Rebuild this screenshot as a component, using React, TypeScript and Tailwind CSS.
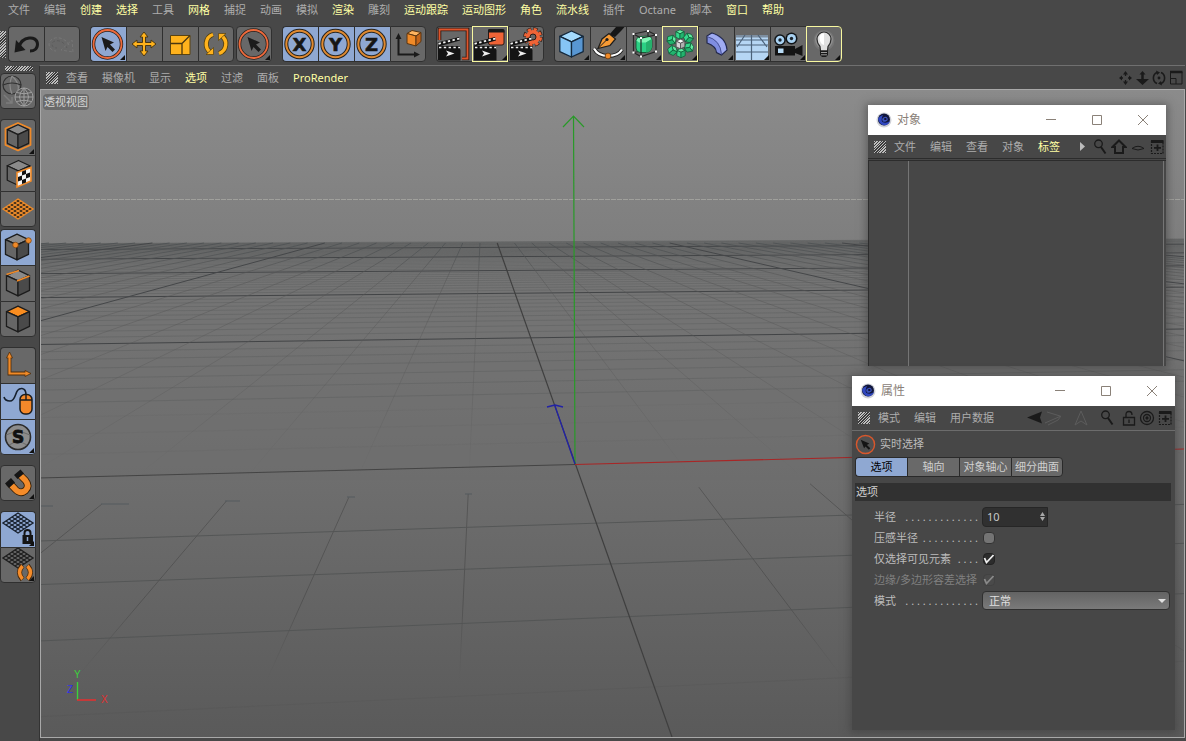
import React, { useState } from "react";
import type { ReactNode } from "react";
import clsx from "clsx";

const FONT = "font-['Noto_Sans','Noto_Sans_CJK_SC',sans-serif]";

type MenuItem = { label: string; hot?: boolean };
type Tool = { name: string; icon: ReactNode; on?: boolean; framed?: boolean; more?: boolean };

const MAIN_MENU: MenuItem[] = [
  { label: "文件" },
  { label: "编辑" },
  { label: "创建", hot: true },
  { label: "选择", hot: true },
  { label: "工具" },
  { label: "网格", hot: true },
  { label: "捕捉" },
  { label: "动画" },
  { label: "模拟" },
  { label: "渲染", hot: true },
  { label: "雕刻" },
  { label: "运动跟踪", hot: true },
  { label: "运动图形", hot: true },
  { label: "角色", hot: true },
  { label: "流水线", hot: true },
  { label: "插件" },
  { label: "Octane" },
  { label: "脚本" },
  { label: "窗口", hot: true },
  { label: "帮助", hot: true },
];

const VIEW_MENU: MenuItem[] = [
  { label: "查看" },
  { label: "摄像机" },
  { label: "显示" },
  { label: "选项", hot: true },
  { label: "过滤" },
  { label: "面板" },
  { label: "ProRender", hot: true },
];

const OBJECT_MENU: MenuItem[] = [
  { label: "文件" },
  { label: "编辑" },
  { label: "查看" },
  { label: "对象" },
  { label: "标签", hot: true },
];

const ATTR_MENU: MenuItem[] = [{ label: "模式" }, { label: "编辑" }, { label: "用户数据" }];

const ATTR_TABS = ["选项", "轴向", "对象轴心", "细分曲面"];

// ── Icon helpers (tool icons share a 36px cell) ──
function Glyph({ children }: { children: ReactNode }) {
  return (
    <svg viewBox="0 0 36 36" className="absolute -top-px -left-px size-9" fill="none">
      {children}
    </svg>
  );
}

function Cube({ x, y, s, top, left, right, stroke = "#1c1c1c", w = 1.5 }: {
  x: number; y: number; s: number; top: string; left: string; right: string; stroke?: string; w?: number;
}) {
  const h = s * 0.9;
  const q = s * 0.42;
  return (
    <g stroke={stroke} strokeWidth={w} strokeLinejoin="round">
      <path d={`M${x} ${y - s}L${x + h} ${y - s + q}L${x} ${y - s + q * 2}L${x - h} ${y - s + q}Z`} fill={top} />
      <path d={`M${x - h} ${y - s + q}L${x} ${y - s + q * 2}V${y + s}L${x - h} ${y + s - q}Z`} fill={left} />
      <path d={`M${x + h} ${y - s + q}L${x} ${y - s + q * 2}V${y + s}L${x + h} ${y + s - q}Z`} fill={right} />
    </g>
  );
}

function SelectRing() {
  return (
    <Glyph>
      <circle cx="17.500" cy="18" r="14" stroke="#2c2420" strokeWidth="3.400" />
      <circle cx="17.500" cy="18" r="14" stroke="#ee6a3c" strokeWidth="1.800" />
      <path d="M11.500 11L24 16.500L20 18.500L25 23.500L22.500 26L17.500 21L15.500 25Z" fill="#1b1b1b" />
    </Glyph>
  );
}

function AxisLetter({ letter }: { letter: string }) {
  return (
    <Glyph>
      <circle cx="17.500" cy="18" r="13.200" stroke="#26231f" strokeWidth="4" />
      <circle cx="17.500" cy="18" r="13.200" stroke="#e08a30" strokeWidth="2" />
      <text
        x="17.500"
        y="24.500"
        textAnchor="middle"
        fontSize="18"
        fontWeight="700"
        fill="#161616"
        stroke="#161616"
        strokeWidth=".6"
        fontFamily="DejaVu Sans, sans-serif"
      >
        {letter}
      </text>
    </Glyph>
  );
}

function Clapper() {
  return (
    <>
      <path d="M2 23.500H24.500V34.500H2Z" fill="#141414" />
      <path d="M1.500 16.500L23 11L24 14.500L2.500 20.500Z" fill="#141414" />
      <path d="M2 20H24V24H2Z" fill="#141414" />
      <path d="M2.500 17.800L23.500 12.500" stroke="#f4f4f4" strokeWidth="1.800" strokeDasharray="2.400 2.400" />
      <path d="M3 21.500H24" stroke="#f4f4f4" strokeWidth="1.600" strokeDasharray="2.400 2.400" />
      <path d="M10 24.500L18.500 27.500L10 30.500L12 27.500Z" fill="#eee" />
    </>
  );
}

const GREY = { top: "#8a8a8a", left: "#666", right: "#4a4a4a" };

function DiamondGrid({ color, cy, fill = "none" }: { color: string; cy: number; fill?: string }) {
  return (
    <g stroke={color} strokeWidth="1.400">
      <path d={`M18 ${cy - 10}L33 ${cy}L18 ${cy + 10}L3 ${cy}Z`} fill={fill} />
      {[1, 2, 3, 4].map(i => (
        <path key={i} d={`M${3 + i * 3} ${cy - i * 2}l15 10M${3 + i * 3} ${cy + i * 2}l15 -10`} strokeWidth="1.200" />
      ))}
    </g>
  );
}

// ── Toolbars ──
const TOOLBAR: { gap: string; tools: Tool[] }[] = [
  {
    gap: "ml-0",
    tools: [
      {
        name: "撤销",
        icon: (
          <Glyph>
            <path d="M11 21C14 10 29 9 29.500 18C29.500 23 26 25 22 25" stroke="#1a1a1a" strokeWidth="3" />
            <path d="M6.500 26.500L8 14L17.500 24Z" fill="#1a1a1a" />
          </Glyph>
        ),
      },
      {
        name: "重做",
        icon: (
          <Glyph>
            <path d="M25 19C20 9 6 10 5 18C5 22 8 25 12 25" stroke="#777" strokeDasharray="3 2" />
            <path d="M23 22C19 13 9 13 8 18C8 21 10 22 13 22" stroke="#5c5c5c" strokeDasharray="3 2" />
            <path d="M29 26L28 14L17 24Z" stroke="#757575" strokeDasharray="3 2" />
          </Glyph>
        ),
      },
    ],
  },
  {
    gap: "ml-2.5",
    tools: [
      { name: "实时选择", on: true, more: true, icon: <SelectRing /> },
      {
        name: "移动",
        icon: (
          <Glyph>
            <path
              d="M18 6L22 11H19.500V16.500H25V14L30 18L25 22V19.500H19.500V25H22L18 30L14 25H16.500V19.500H11V22L6 18L11 14V16.500H16.500V11H14Z"
              fill="#ffb21c"
              stroke="#4a3814"
              strokeWidth="1"
            />
          </Glyph>
        ),
      },
      {
        name: "缩放",
        icon: (
          <Glyph>
            <path d="M8.500 9.500H28V28.500H8.500Z" fill="#ffb21c" stroke="#5a4310" />
            <path d="M8.500 17.500H20V28.500M20 17.500L28 9.500" stroke="#4a3710" strokeWidth="1.300" />
          </Glyph>
        ),
      },
      {
        name: "旋转",
        icon: (
          <Glyph>
            <path d="M13 26.500A10 10 0 0 1 15 8.500M23 9.500A10 10 0 0 1 21 27.500" stroke="#54400f" strokeWidth="5" />
            <path d="M13 26.500A10 10 0 0 1 15 8.500M23 9.500A10 10 0 0 1 21 27.500" stroke="#ffb21c" strokeWidth="3.400" />
            <path d="M8 28.500H15.500V21.500ZM28 7.500H20.500V14.500Z" fill="#ffb21c" stroke="#54400f" strokeWidth=".7" />
          </Glyph>
        ),
      },
    ],
  },
  { gap: "ml-0.5", tools: [{ name: "选择工具", more: true, icon: <SelectRing /> }] },
  {
    gap: "ml-2.5",
    tools: [
      { name: "X 轴", on: true, icon: <AxisLetter letter="X" /> },
      { name: "Y 轴", on: true, icon: <AxisLetter letter="Y" /> },
      { name: "Z 轴", on: true, icon: <AxisLetter letter="Z" /> },
      {
        name: "坐标系统",
        icon: (
          <Glyph>
            <path d="M8.500 12V28.500H25" stroke="#1a1a1a" strokeWidth="2" />
            <path d="M5.500 13L8.500 7L11.500 13ZM24 25.500L30 28.500L24 31.500Z" fill="#1a1a1a" />
            <path d="M17 7.500L22 4.500L31 6.500L26 10Z" fill="#ffb460" stroke="#5a3510" />
            <path d="M17 7.500L26 10V20L17 17.500Z" fill="#f08a28" stroke="#5a3510" />
            <path d="M26 10L31 6.500V15.500L26 20Z" fill="#c4641a" stroke="#5a3510" />
          </Glyph>
        ),
      },
    ],
  },
  {
    gap: "ml-2.5",
    tools: [
      {
        name: "渲染活动视图",
        icon: (
          <Glyph>
            <path d="M3.500 14V3.500H31.500V32.500H26" stroke="#2a1a14" strokeWidth="3.600" />
            <path d="M3.500 14V3.500H31.500V32.500H26" stroke="#e0552c" strokeWidth="1.800" />
            <Clapper />
          </Glyph>
        ),
      },
      {
        name: "渲染到图片查看器",
        framed: true,
        more: true,
        icon: (
          <Glyph>
            <rect x="16.500" y="3.500" width="15.500" height="15.500" rx="2" fill="#ef6437" stroke="#2a1a14" />
            <path d="M16 6.500V4Q16 3 17.500 3H31Q32.500 3 32.500 4.500V6.500Z" fill="#1a1a1a" />
            <Clapper />
          </Glyph>
        ),
      },
      {
        name: "编辑渲染设置",
        icon: (
          <Glyph>
            <circle cx="25" cy="11" r="7.500" stroke="#2a1a14" strokeWidth="4.600" strokeDasharray="4 1.890" />
            <circle cx="25" cy="11" r="7.500" stroke="#ef6437" strokeWidth="3.200" strokeDasharray="3.200 2.690" strokeDashoffset="-.4" />
            <circle cx="25" cy="11" r="5" stroke="#ef6437" strokeWidth="4" />
            <circle cx="25" cy="11" r="3" fill="#666" stroke="#2a1a14" />
            <Clapper />
          </Glyph>
        ),
      },
    ],
  },
  {
    gap: "ml-2.5",
    tools: [
      {
        name: "立方体",
        more: true,
        icon: (
          <Glyph>
            <Cube x={17.500} y={18} s={13} top="#a4dbff" left="#86c5f5" right="#5896d2" stroke="#14283c" w={1.300} />
          </Glyph>
        ),
      },
      {
        name: "画笔",
        more: true,
        icon: (
          <Glyph>
            <path d="M19 9L26 1H34.500L31 5L25 11Z" fill="#161616" />
            <path d="M8 22.500L12 13L19 7.500L25.500 13L20 19.500Z" fill="#f79a34" stroke="#1c1c1c" strokeWidth="1.200" />
            <path d="M8 22.500L16.500 14" stroke="#1c1c1c" />
            <circle cx="17" cy="13.500" r="1.600" fill="#1c1c1c" />
            <path d="M4 22.500Q8 30 18 30Q28 30 32 23.500" stroke="#1c1c1c" strokeWidth="3.800" />
            <path d="M4 22.500Q8 30 18 30Q28 30 32 23.500" stroke="#fff" strokeWidth="2.200" />
            <circle cx="18" cy="30" r="2.900" fill="#f08a28" stroke="#5a3510" strokeWidth=".8" />
          </Glyph>
        ),
      },
      {
        name: "细分曲面",
        more: true,
        icon: (
          <Glyph>
            <path d="M7.500 8L22 5V24M22 24L7.500 26.500" stroke="#262626" strokeWidth="1.200" />
            <path d="M10 14.500Q11 10.500 15 10.500L22 10Q26.500 11 26 14V21Q25 26 20 26.500H14Q10 26 10 22Z" fill="#2bd084" stroke="#0e4a2a" strokeWidth=".8" />
            <path d="M10.500 14.500Q11.500 11 15 11L22 10.500Q25 11 25.500 13L20 16.500H13Z" fill="#7df5b4" />
            <path d="M20 16.500L26 13V21Q25 26 20 26.500Z" fill="#25b06c" />
            <path d="M7.500 8L15 12L30 9V25.500L15 30.500L7.500 26.500ZM15 12V30.500M22 5L30 9" stroke="#262626" strokeWidth="1.200" />
            <g fill="#fff">
              <rect x="6.500" y="7" width="2" height="2" />
              <rect x="21" y="4" width="2" height="2" />
              <rect x="29" y="8" width="2" height="2" />
              <rect x="14" y="11" width="2" height="2" />
              <rect x="6.500" y="25.500" width="2" height="2" />
              <rect x="14" y="29.500" width="2" height="2" />
              <rect x="29" y="24.500" width="2" height="2" />
            </g>
          </Glyph>
        ),
      },
      {
        name: "阵列",
        framed: true,
        more: true,
        icon: (
          <Glyph>
            {[[18, 8.5, 0], [26.5, 12, 40], [27, 21.5, 80], [19, 27, 0], [10.5, 24.500, 50], [9.5, 14, 75]].map(([x, y, r]) => (
              <g key={r + x} transform={`rotate(${r} ${x} ${y})`}>
                <Cube x={x} y={y} s={4.700} top="#62eba0" left="#34d88c" right="#22b46e" stroke="#0f5a36" w={0.700} />
              </g>
            ))}
            <Cube x={18.500} y={18} s={4.800} top="#fff" left="#d4d4d4" right="#b0b0b0" stroke="#444" w={0.700} />
          </Glyph>
        ),
      },
      {
        name: "变形器",
        more: true,
        icon: (
          <Glyph>
            <path d="M9 10L14 7Q28 11 29 24L23.500 29L18.500 26.500Q18 20 9 17Z" fill="#7f8de0" stroke="#23284a" strokeWidth="1.200" />
            <path d="M9.500 10.500L14 7.700Q27 12 28.300 23.800L23.500 28Q23 14 9.500 10.500Z" fill="#a0acf2" />
            <path d="M9 10.500Q22.500 14 23.500 28.500" stroke="#4a5498" />
          </Glyph>
        ),
      },
      {
        name: "地面",
        more: true,
        icon: (
          <Glyph>
            <path d="M2 9H34V34H2Z" fill="#b6d6f4" />
            <path d="M2 9H34V11.500H2Z" fill="#7d8ea0" />
            <path d="M2 14H34M2 19H34M2 26H34M17.500 9V34M11 9L3 21M24 9L33 21" stroke="#4c627a" strokeWidth="1.200" />
          </Glyph>
        ),
      },
      {
        name: "摄像机",
        more: true,
        icon: (
          <Glyph>
            <circle cx="10" cy="14" r="5.800" fill="#101418" />
            <circle cx="21.500" cy="12.500" r="6" fill="#101418" />
            <circle cx="10" cy="14" r="4.300" fill="#a9d2f2" />
            <circle cx="21.500" cy="12.500" r="4.500" fill="#a9d2f2" />
            <circle cx="10" cy="14" r="1.700" fill="#1a232c" />
            <circle cx="21.500" cy="12.500" r="1.700" fill="#1a232c" />
            <path d="M5 20H25V23L32.500 19V30L25 27V29.500H5Z" fill="#141414" />
            <rect x="8" y="22.500" width="5.500" height="4.500" fill="#b9dcf6" />
          </Glyph>
        ),
      },
      {
        name: "灯光",
        framed: true,
        more: true,
        icon: (
          <Glyph>
            <circle cx="18" cy="14.500" r="10.500" fill="#757575" />
            <circle cx="18" cy="14" r="9" fill="#8e8e8e" />
            <path d="M14.500 25L14 20.500Q11 17 11 13A7 7 0 0 1 25 13Q25 17 22 20.500L21.500 25Z" fill="#e0e0e0" stroke="#2c2c2c" strokeWidth="1.200" />
            <path d="M13.500 12A4 4 0 0 1 18 7.500V19Q14 18 13.500 12Z" fill="#fff" />
            <path d="M14 24.500H22V29L20 31H16L14 29Z" fill="#1a1a1a" />
            <path d="M15 26.500H21M15 28.800H21" stroke="#bbb" strokeWidth=".8" />
          </Glyph>
        ),
      },
    ],
  },
];

const SIDEBAR: { gap: string; tools: Tool[] }[] = [
  {
    gap: "mt-0",
    tools: [
      {
        name: "转为可编辑对象",
        icon: (
          <Glyph>
            <g stroke="#303030" strokeWidth="1.200">
              <circle cx="12" cy="12" r="9" />
              <path d="M12 3Q8 12 12 21M12 3Q20 10 18 18" stroke="#8a8a8a" />
              <path d="M3 12Q12 8 21 12" />
            </g>
            <g stroke="#a0a0a0">
              <circle cx="24" cy="24" r="9" fill="#5c5c5c" />
              <path d="M24 15V33M15 24H33M16.500 19.500Q24 22 31.500 19.500M16.500 28.500Q24 26 31.500 28.500M24 15Q15 24 24 33Q33 24 24 15" />
              <path d="M4 22L12 30M12 24V30H6" stroke="#7c7c7c" strokeWidth="1.500" />
            </g>
          </Glyph>
        ),
      },
    ],
  },
  {
    gap: "mt-2.5",
    tools: [
      {
        name: "模型",
        more: true,
        icon: (
          <Glyph>
            <path d="M18 4L30.500 9.500V26L18 31.500L5.500 26V9.500Z" stroke="#f08a28" strokeWidth="1.800" strokeLinejoin="round" />
            <Cube x={18} y={17.500} s={11.800} {...GREY} w={1.200} />
          </Glyph>
        ),
      },
      {
        name: "纹理",
        icon: (
          <Glyph>
            <Cube x={18.500} y={18} s={12.500} {...GREY} w={1.300} />
            <path d="M17 17.500L31 12.500V26L17 32Z" fill="#f4f4f4" stroke="#f08a28" strokeWidth="1.600" />
            <path d="M22 16.500L26 15V19L22 20.500ZM18 22L22 20.500V25L18 26.500ZM26 19L30 17.500V22L26 23.500ZM22 25L26 23.500V27.500L22 29Z" fill="#111" />
          </Glyph>
        ),
      },
      { name: "工作平面", icon: <Glyph><DiamondGrid color="#ef8c2a" cy={18} fill="#3c2b1a" /></Glyph> },
    ],
  },
  {
    gap: "mt-0.5",
    tools: [
      {
        name: "点",
        on: true,
        icon: (
          <Glyph>
            <Cube x={17} y={18} s={12.800} {...GREY} w={1.300} />
            <circle cx="15.500" cy="16" r="2.800" fill="#f08a28" stroke="#7a420f" strokeWidth=".7" />
            <circle cx="28.500" cy="11.500" r="2.800" fill="#f08a28" stroke="#7a420f" strokeWidth=".7" />
          </Glyph>
        ),
      },
      {
        name: "边",
        icon: (
          <Glyph>
            <Cube x={18} y={18} s={12.800} {...GREY} w={1.300} />
            <path d="M6.500 9.500L19 5.500M17 16L29.500 11" stroke="#f08a28" strokeWidth="1.800" />
          </Glyph>
        ),
      },
      { name: "多边形", icon: <Glyph><Cube x={18} y={18} s={12.800} {...GREY} top="#f98d20" w={1.300} /></Glyph> },
    ],
  },
  {
    gap: "mt-2.5",
    tools: [
      {
        name: "启用轴心",
        icon: (
          <Glyph>
            <path d="M9.500 10V26.500H26" stroke="#4d2c0c" strokeWidth="3.800" />
            <path d="M6.500 11L9.500 5L12.500 11ZM25 23.500L31 26.500L25 29.500Z" fill="#f08a28" stroke="#4d2c0c" strokeWidth=".8" />
            <path d="M9.500 10V26.500H26" stroke="#f08a28" strokeWidth="2.200" />
          </Glyph>
        ),
      },
      {
        name: "微调",
        on: true,
        icon: (
          <Glyph>
            <path d="M4 14Q5 18 10 18C17 18 14 5 22 5.500Q26 6 26 12" stroke="#16202e" strokeWidth="1.600" />
            <rect x="20" y="11.500" width="12" height="19.500" rx="5" fill="#f5882a" stroke="#1c1c1c" strokeWidth="1.500" />
            <path d="M20 17H32M26 11.500V17" stroke="#1c1c1c" strokeWidth="1.400" />
          </Glyph>
        ),
      },
      {
        name: "视窗独显",
        on: true,
        more: true,
        icon: (
          <Glyph>
            <circle cx="18" cy="18" r="12.500" fill="#8c8c8c" stroke="#2c2c2c" strokeWidth="1.600" />
            <path d="M6 16Q18 10 30 16M9 26Q18 20 27 26" stroke="#6a6a6a" />
            <text x="18" y="24" textAnchor="middle" fontSize="17" fontWeight="700" fill="#101010" stroke="#101010" strokeWidth=".8" fontFamily="DejaVu Sans, sans-serif">
              S
            </text>
          </Glyph>
        ),
      },
    ],
  },
  {
    gap: "mt-2.5",
    tools: [
      {
        name: "启用捕捉",
        more: true,
        icon: (
          <Glyph>
            <path d="M9 17.500L15.500 24.500Q20.500 29.500 25.500 25.500Q30 21 25.500 15.500L19.500 9.500" stroke="#3a2209" strokeWidth="7.400" />
            <path d="M9 17.500L15.500 24.500Q20.500 29.500 25.500 25.500Q30 21 25.500 15.500L19.500 9.500" stroke="#f58c2a" strokeWidth="5.600" />
            <path d="M5 18.500L11 13L15 17.500L9 23ZM14 10L20.500 4.500L24 8.500L17.500 14Z" fill="#151515" />
          </Glyph>
        ),
      },
    ],
  },
  {
    gap: "mt-2.5",
    tools: [
      {
        name: "锁定工作平面",
        on: true,
        more: true,
        icon: (
          <Glyph>
            <DiamondGrid color="#1a2330" cy={12} />
            <path d="M24.500 25V22Q24.500 19 27.500 19Q30.500 19 30.500 22V25" stroke="#151515" strokeWidth="2" />
            <rect x="22.500" y="24" width="10.500" height="9" fill="#151515" />
            <path d="M27.500 26V30" stroke="#8fa8d2" strokeWidth="1.500" />
          </Glyph>
        ),
      },
      {
        name: "工作平面模式",
        more: true,
        icon: (
          <Glyph>
            <DiamondGrid color="#202020" cy={11} />
            <path d="M22.500 32.500Q16.500 25.500 22.500 18.500M27.500 18.500Q33.500 25.500 27.500 32.500" stroke="#4a2a0c" strokeWidth="5" />
            <path d="M22.500 32Q16.500 25.500 22.500 19M27.500 19Q33.500 25.500 27.500 32" stroke="#f58c2a" strokeWidth="3.400" />
          </Glyph>
        ),
      },
    ],
  },
];

function ToolGroup({ tools, gap, vertical }: { tools: Tool[]; gap: string; vertical?: boolean }) {
  return (
    <div className={clsx("flex", vertical && "flex-col", gap)}>
      {tools.map(t => (
        <button
          key={t.name}
          aria-label={t.name}
          className={clsx(
            "relative size-9 overflow-hidden border border-[#303030]",
            vertical
              ? "not-last:border-b-0 first:rounded-t-sm last:rounded-b-sm"
              : "not-last:border-r-0 first:rounded-l-sm last:rounded-r-sm",
            t.framed && "outline -outline-offset-1 outline-[#f8f8a0]",
            t.on ? "bg-[#8fa8d2]" : "bg-[#686868]"
          )}
        >
          {t.icon}
          {t.more && (
            <svg viewBox="0 0 5 5" className="absolute right-px bottom-px size-[5px]">
              <path d="M5 0V5H0Z" fill="#111" />
            </svg>
          )}
        </button>
      ))}
    </div>
  );
}

function Grip({ className }: { className: string }) {
  return (
    <span
      className={clsx(
        "shrink-0 bg-[linear-gradient(#3c3c3c_0_0),repeating-linear-gradient(135deg,#bcbcbc_0_1px,#3c3c3c_1px_2px)] bg-[length:0_0,auto]",
        className
      )}
    />
  );
}

function MenuButtons({ items }: { items: MenuItem[] }) {
  return (
    <>
      {items.map(m => (
        <button key={m.label} className={clsx("shrink-0 whitespace-nowrap", m.hot ? "text-[#ffffa4]" : "text-[#adadad]")}>
          {m.label}
        </button>
      ))}
    </>
  );
}

// ── 3D viewport ──
// Lines along X meet at (10660, 110), lines along Z at (441, 110).
const HORIZON = 110;
const rowAt = (n: number, x: number) => HORIZON + ((10660 - x) / 10125) / (0.003788 + 0.00035 * n);
const colAt = (k: number, y: number) => 441 + (0.354 + 0.401 * k) * (y - HORIZON);

const FAR_ROWS = Array.from({ length: 58 }, (_, i) => i + 1);
const NEAR_ROWS = [-2, -3, -4, -5];
const COLS = Array.from({ length: 61 }, (_, i) => i - 30);

function Scene() {
  return (
    <svg viewBox="0 0 1143 647" preserveAspectRatio="xMinYMin slice" className="absolute inset-0 size-full" fill="none">
      <defs>
        <linearGradient id="sky" x1="0" y1="0" x2="0" y2="1">
          <stop offset="0" stopColor="#8b8b8b" />
          <stop offset="0.240" stopColor="#7e7e7e" />
          <stop offset="0.600" stopColor="#6e6e6e" />
          <stop offset="1" stopColor="#5a5a5a" />
        </linearGradient>
        <linearGradient id="nearFade" gradientUnits="userSpaceOnUse" x1="0" y1="400" x2="0" y2="590">
          <stop offset="0" stopColor="#565656" />
          <stop offset="0.600" stopColor="#525252" />
          <stop offset="1" stopColor="#525252" stopOpacity="0" />
        </linearGradient>
        <linearGradient id="farFade" gradientUnits="userSpaceOnUse" x1="0" y1="153" x2="0" y2="390">
          <stop offset="0" stopColor="#4c5052" stopOpacity="0.800" />
          <stop offset="0.150" stopColor="#555" stopOpacity="0.500" />
          <stop offset="0.700" stopColor="#585858" stopOpacity="0.300" />
          <stop offset="1" stopColor="#585858" stopOpacity="0" />
        </linearGradient>
      </defs>
      <rect width="1143" height="647" fill="url(#sky)" />
      <rect y="153" width="1143" height="237" fill="#6c6c6c" opacity="0.450" />
      <path d="M0 109.500H1143" stroke="#a0a09c" strokeDasharray="5 1" />

      {FAR_ROWS.map(n => (
        <path
          key={n}
          d={`M0 ${rowAt(n, 0)}L1143 ${rowAt(n, 1143)}`}
          stroke={n % 10 === 0 ? "#424446" : "#585a5a"}
          strokeOpacity={n % 10 === 0 ? 1 : n > 40 ? 0.5 : n < 4 ? 0.1 : 0.38}
        />
      ))}
      {COLS.filter(k => k % 10 !== 0).map(k => (
        <path key={k} d={`M${colAt(k, 153)} 153L${colAt(k, 390)} 390`} stroke="url(#farFade)" />
      ))}
      {[-30, -20, -10, 10, 20, 30].map(k => (
        <path key={k} d={`M${colAt(k, 153)} 153L${colAt(k, 400)} 400`} stroke="#454749" />
      ))}

      {NEAR_ROWS.map(n => (
        <path
          key={n}
          d={`M0 ${rowAt(n, 0)}L1143 ${rowAt(n, 1143)}`}
          stroke="#525454"
          strokeOpacity={n === -5 ? 0.3 : 0.9}
        />
      ))}
      {[-4, -3, -2, -1, 1, 2, 3].map(k => {
        const top = rowAt(-1, colAt(k, 405));
        return <path key={k} d={`M${colAt(k, top)} ${top}L${colAt(k, 600)} 600`} stroke="url(#nearFade)" />;
      })}
      <path d="M60 414H88M184 411H199M306 407H314M424 404H431M0 416H12" stroke="#555b5f" />

      {/* axes */}
      <path d={`M0 ${rowAt(0, 0)}L534 374.500`} stroke="#444" />
      <path d={`M${colAt(0, 153)} 153L631 647`} stroke="#3f3f3f" strokeWidth="1.200" />
      <path d="M534 374.500L1143 359" stroke="#a82626" strokeWidth="1.200" />
      <path d="M532.500 26L534 374M522 37L532.500 26L543 37" stroke="#289a28" strokeWidth="1.200" />
      <path d="M534 374L514 316M506 317L514 315L522 317" stroke="#2222a6" strokeWidth="1.300" />

      {/* orientation gizmo */}
      <g fontSize="10" fontFamily="Liberation Sans, sans-serif">
        <path d="M36.500 592V610" stroke="#3bd23b" strokeWidth="1.400" />
        <path d="M36 610H55" stroke="#e03030" strokeWidth="1.600" />
        <text x="33" y="588" fill="#3bd23b">Y</text>
        <text x="60" y="613" fill="#e03030">X</text>
        <text x="26" y="603" fill="#3030e8">Z</text>
      </g>
    </svg>
  );
}

// ── Floating windows ──
function Logo() {
  return (
    <svg viewBox="0 0 16 16" className="size-4">
      <circle cx="8" cy="8" r="7.500" fill="#d0d2d8" />
      <circle cx="8" cy="7.500" r="6" fill="#10163c" />
      <path d="M2 7Q4 13.500 9 13.300Q12.500 13 14 9Q10 12 6.500 10Q4.500 8 7 3Q3 4 2 7Z" fill="#3048c0" />
      <ellipse cx="9" cy="7.300" rx="2.800" ry="2.300" fill="#3a50b8" transform="rotate(-30 9 7.300)" />
      <ellipse cx="9.300" cy="7" rx="1.300" ry="1" fill="#0c1030" />
    </svg>
  );
}

function TitleBar({ title }: { title: string }) {
  const caption = "grid h-full w-[46px] place-items-center";
  return (
    <header className="flex h-[30px] items-center gap-[5px] bg-white pl-2 text-[#8a8178]">
      <Logo />
      <h2 className="flex-1 text-xs">{title}</h2>
      <div className="flex h-full">
        <button aria-label="最小化" className={caption}>
          <svg viewBox="0 0 11 11" className="size-[11px]"><path d="M0 4.500H10" stroke="currentColor" /></svg>
        </button>
        <button aria-label="最大化" className={caption}>
          <svg viewBox="0 0 11 11" className="size-[11px]" fill="none"><path d="M.5 .5H9.500V9.500H.5Z" stroke="currentColor" /></svg>
        </button>
        <button aria-label="关闭" className={caption}>
          <svg viewBox="0 0 11 11" className="size-[11px]"><path d="M0 0L10 10M10 0L0 10" stroke="currentColor" /></svg>
        </button>
      </div>
    </header>
  );
}

function SmallIcon({ label, className = "size-4", children }: { label: string; className?: string; children: ReactNode }) {
  return (
    <button aria-label={label} className="shrink-0">
      <svg viewBox="0 0 16 16" className={className} fill="none" stroke="#1a1a1a" strokeWidth="1.300">
        {children}
      </svg>
    </button>
  );
}

const SearchIcon = () => (
  <SmallIcon label="搜索">
    <circle cx="6.500" cy="4.800" r="3.800" />
    <path d="M9 8L13.500 14.500" strokeWidth="2" />
  </SmallIcon>
);

const AddPanelIcon = () => (
  <SmallIcon label="新建面板">
    <path d="M2 2.500H14.500" strokeWidth="3" />
    <path d="M2.500 2V14.500H14V2" strokeWidth="1.200" strokeDasharray="2 1" />
    <path d="M8.500 5.500V12M5 8.800H12" strokeWidth="1.800" />
  </SmallIcon>
);

function ObjectWindow() {
  return (
    <section className="absolute top-[15px] right-[18px] flex h-[261px] w-[298px] flex-col bg-[#474747] shadow-[0_1px_8px_2px_rgba(60,60,60,0.55)]">
      <TitleBar title="对象" />
      <nav className="flex h-6 items-center gap-3.5 border-b border-[#2c2c2c] pl-1.5">
        <Grip className="-mr-1.5 h-3 w-3" />
        <MenuButtons items={OBJECT_MENU} />
        <div className="ml-auto flex items-center gap-[3px] pr-px">
          <button aria-label="更多">
            <svg viewBox="0 0 5 9" className="mr-1 h-[9px] w-[5px]"><path d="M0 0L5 4.500L0 9Z" fill="#bdbdbd" /></svg>
          </button>
          <SearchIcon />
          <SmallIcon label="主页">
            <path d="M8 1.500L14.500 8H12V14H4V8H1.500Z" strokeWidth="2" />
          </SmallIcon>
          <SmallIcon label="显示">
            <path d="M2 9.500Q8 5 14 9.500Q8 12.500 2 9.500Z" strokeWidth="1" />
          </SmallIcon>
          <AddPanelIcon />
        </div>
      </nav>
      <div className="mt-px flex flex-1 border-t border-l border-[#2c2c2c]">
        <div className="w-10 border-r border-[#757575]" />
        <div className="mr-0.5 flex-1 border-r border-[#757575]" />
      </div>
    </section>
  );
}

function Field({ id, label, dots, muted, children }: { id: string; label: string; dots: number; muted?: boolean; children: ReactNode }) {
  return (
    <div className="flex h-[21px] items-center">
      <label htmlFor={id} className={clsx("flex w-[108px] justify-between pr-1 whitespace-nowrap", muted ? "text-[#808080]" : "text-[#bcbcbc]")}>
        <span>{label}</span>
        <span aria-hidden="true">{". ".repeat(dots)}</span>
      </label>
      {children}
    </div>
  );
}

function Tick({ id, checked, disabled, onChange }: { id: string; checked: boolean; disabled?: boolean; onChange?: () => void }) {
  return (
    <span className="grid size-3.5 place-items-center">
      <input
        id={id}
        type="checkbox"
        checked={checked}
        disabled={disabled}
        readOnly={!onChange}
        onChange={onChange}
        className={clsx(
          "col-start-1 row-start-1 size-3 appearance-none rounded-sm border",
          disabled ? "border-[#424242] bg-[#4a4a4a]" : checked ? "border-[#222] bg-[#2c2c2c]" : "border-[#333] bg-[#747474]"
        )}
      />
      {checked && (
        <svg viewBox="0 0 14 14" className="pointer-events-none col-start-1 row-start-1 size-3.5" fill="none">
          <path d="M2.500 6L4.500 10.500L11.500 3" stroke={disabled ? "#8a8a8a" : "#f0f0f0"} strokeWidth="1.800" />
        </svg>
      )}
    </span>
  );
}

function AttributeWindow() {
  const [tab, setTab] = useState("选项");
  const [radius, setRadius] = useState("10");
  const [pressure, setPressure] = useState(false);
  const [visibleOnly, setVisibleOnly] = useState(true);

  return (
    <section className="absolute top-[286px] right-[9px] bottom-[7px] w-[323px] bg-[#474747] shadow-[0_1px_8px_2px_rgba(60,60,60,0.55)]">
      <TitleBar title="属性" />
      <nav className="flex h-6 items-center gap-3.5 pl-1.5">
        <Grip className="-mr-1.5 h-3 w-3" />
        <MenuButtons items={ATTR_MENU} />
        <div className="ml-auto flex items-center gap-0.5 pr-0.5">
          <SmallIcon label="后退">
            <path d="M0 7.500L15 1.500L13 7.500L15 13.500Z" fill="#1a1a1a" stroke="none" />
          </SmallIcon>
          <SmallIcon label="前进">
            <path d="M0 13L16 6L13 10L3 15M2 2L15 6" stroke="#5c5c5c" strokeWidth="1" />
          </SmallIcon>
          <span className="w-2" />
          <SmallIcon label="上一级">
            <path d="M8 1L14 15L8 11L2 15Z" stroke="#5c5c5c" strokeWidth="1" />
          </SmallIcon>
          <span className="w-1.5" />
          <SearchIcon />
          <span className="w-0.5" />
          <SmallIcon label="锁定">
            <path d="M5 7V4.500Q5 1.500 8 1.500Q11 1.500 11 5" />
            <path d="M2.500 7.500H13.500V15H2.500ZM8 9.500V13" />
          </SmallIcon>
          <SmallIcon label="目标">
            <circle cx="8" cy="8" r="6.500" />
            <circle cx="8" cy="8" r="3.500" />
            <circle cx="8" cy="8" r="1" fill="#1a1a1a" />
          </SmallIcon>
          <AddPanelIcon />
        </div>
      </nav>

      <div className="border-t border-[#6c6c6c] px-[3px]">
        <div className="flex h-[26px] items-center gap-1">
          <svg viewBox="0 0 22 22" className="size-[21px]" fill="none">
            <circle cx="11" cy="11" r="9.500" fill="#505050" stroke="#d8572c" strokeWidth="1.500" />
            <path d="M6 6L15 10L12.500 11.500L16 15L14.500 16.500L11 13L9.500 15Z" fill="#141414" />
          </svg>
          <h3 className="text-[#bcbcbc]">实时选择</h3>
        </div>

        <div role="tablist" className="flex">
          {ATTR_TABS.map(t => (
            <button
              key={t}
              role="tab"
              aria-selected={tab === t}
              onClick={() => setTab(t)}
              className={clsx(
                "h-5 w-[52px] border border-[#2a2a2a] not-last:border-r-0 first:rounded-l-sm last:rounded-r-sm",
                tab === t ? "bg-[#8fa8d2] text-black" : "bg-[#696969] text-[#d0d0d0]"
              )}
            >
              {t}
            </button>
          ))}
        </div>

        <h4 className="mt-1.5 mr-px h-[18px] bg-[#313131] pl-px leading-[18px] text-[#cfcfcf]">{tab}</h4>

        <div className="mt-[5px] pl-[19px]">
          <Field id="radius" label="半径" dots={13}>
            <div className="flex h-5 w-[66px] items-center rounded-l-sm border border-[#262626] bg-[#303030] pr-0.5">
              <input
                id="radius"
                value={radius}
                onChange={e => setRadius(e.target.value)}
                className="w-full min-w-0 bg-transparent pl-1 text-[#c8c8c8] outline-none"
              />
              <svg viewBox="0 0 5 9" className="h-[9px] w-[5px] shrink-0"><path d="M0 4L2.500 0L5 4ZM0 5L2.500 9L5 5Z" fill="#a8a8a8" /></svg>
            </div>
          </Field>
          <Field id="pressure" label="压感半径" dots={10}>
            <Tick id="pressure" checked={pressure} onChange={() => setPressure(!pressure)} />
          </Field>
          <Field id="visible" label="仅选择可见元素" dots={4}>
            <Tick id="visible" checked={visibleOnly} onChange={() => setVisibleOnly(!visibleOnly)} />
          </Field>
          <Field id="tolerance" label="边缘/多边形容差选择" dots={0} muted>
            <Tick id="tolerance" checked disabled />
          </Field>
          <Field id="mode" label="模式" dots={13}>
            <span className="relative mr-0.5 flex-1">
              <select
                id="mode"
                className="block h-[19px] w-full appearance-none rounded-sm border border-[#303030] bg-linear-to-b from-[#636363] to-[#7a7a7a] pl-1.5 leading-4 text-[#e0e0e0]"
              >
                <option>正常</option>
              </select>
              <svg viewBox="0 0 8 4" className="pointer-events-none absolute top-2 right-1 h-1 w-2"><path d="M0 0H8L4 4Z" fill="#e0e0e0" /></svg>
            </span>
          </Field>
        </div>
      </div>
    </section>
  );
}

export default function App() {
  return (
    <div className={clsx("flex min-h-screen flex-col overflow-hidden bg-[#484848] text-[11px] leading-4", FONT)}>
      {/* MENU */}
      <nav className="flex h-5 items-center gap-3.5 pl-2">
        <MenuButtons items={MAIN_MENU} />
      </nav>

      {/* TOOLBAR */}
      <div className="mt-1.5 mb-[3px] flex items-center">
        <Grip className="mr-0.5 h-[27px] w-1.5" />
        {TOOLBAR.map(g => (
          <ToolGroup key={g.tools[0].name} {...g} />
        ))}
      </div>

      <div className="flex flex-1">
        {/* SIDE TOOLS */}
        <aside className="flex w-[39px] shrink-0 flex-col">
          <Grip className="mt-px mb-0.5 ml-[5px] h-[5px] w-7" />
          {SIDEBAR.map(g => (
            <ToolGroup key={g.tools[0].name} {...g} vertical />
          ))}
        </aside>

        {/* VIEWPORT */}
        <main className="mr-px flex min-w-0 flex-1 flex-col border-t border-l border-[#707070] border-l-[#333]">
          <nav className="flex h-[23px] items-center gap-3.5 pl-1.5">
            <Grip className="-mr-1.5 h-3 w-3" />
            <MenuButtons items={VIEW_MENU} />
            <div className="ml-auto flex items-center gap-px pr-px">
              <SmallIcon label="平移">
                <path d="M8.500 1L11 4.500H6ZM8.500 15L11 11.500H6ZM2 8L5 5.500V10.500ZM15 8L12 5.500V10.500Z" fill="#1a1a1a" stroke="none" />
                <path d="M8.500 4V6M8.500 10V12M4 8H6M11 8H13" />
              </SmallIcon>
              <SmallIcon label="推拉">
                <path d="M8.500 1L11.500 4.500H5.500ZM2 9H15L8.500 15Z" fill="#1a1a1a" stroke="none" />
                <path d="M8.500 4V10" strokeWidth="2.500" />
              </SmallIcon>
              <SmallIcon label="旋转视图">
                <path d="M6 13.500A6 6 0 0 1 6 2.500M10 2.500A6 6 0 0 1 10 13.500" strokeWidth="1.600" />
                <path d="M5 .5L9 2.500L6 5ZM11 15.500L7 13.500L10 11Z" fill="#1a1a1a" stroke="none" />
                <circle cx="8" cy="8" r=".8" fill="#1a1a1a" />
              </SmallIcon>
              <SmallIcon label="切换视图">
                <path d="M2 2H14.500" strokeWidth="2.500" />
                <path d="M2.500 2V14H14V2M2.500 8.500H8V14" strokeWidth="1" />
              </SmallIcon>
            </div>
          </nav>
          <div className="relative mb-[3px] flex-1 overflow-hidden border border-[#a8a8a8]">
            <Scene />
            <span className="relative mt-1 ml-0.5 inline-block rounded-sm bg-[#6a6a6a] px-px text-[#d4d4d4]">透视视图</span>
            <ObjectWindow />
            <AttributeWindow />
          </div>
        </main>
      </div>
    </div>
  );
}
